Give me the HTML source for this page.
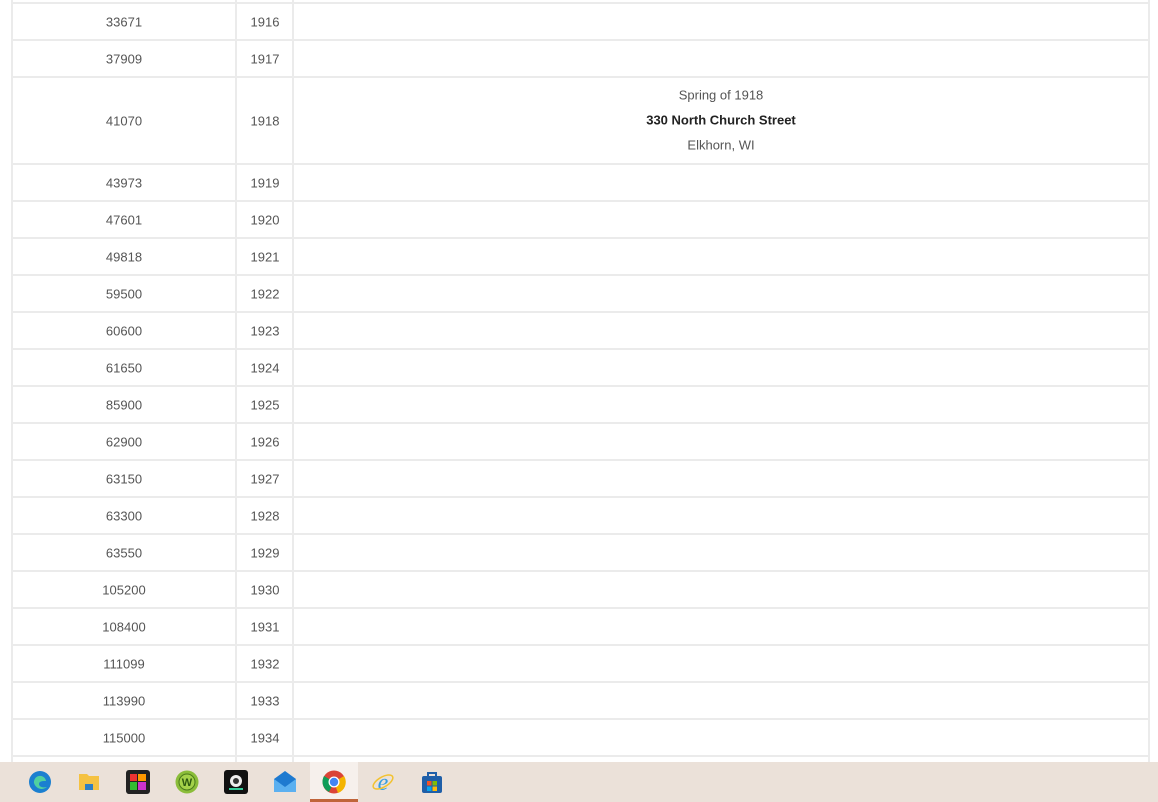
<!DOCTYPE html>
<html><head><style>
body{margin:0;width:1158px;height:802px;overflow:hidden;background:#fff;position:relative;font-family:"Liberation Sans",sans-serif;font-size:13px;color:#555}
.h{position:absolute;left:12px;width:1138px;height:2px;background:#ebebeb}
.v{position:absolute;top:0;height:762px;width:2px;background:#ebebeb}
.t{position:absolute;transform:translate(-50%,-50%);white-space:nowrap}
.tb{position:absolute;left:0;top:762px;width:1158px;height:40px;background:#ebe1d9}
.ic{position:absolute;top:770px;width:24px;height:24px}
</style></head><body>
<div class="v" style="left:11px"></div>
<div class="v" style="left:235px"></div>
<div class="v" style="left:292px"></div>
<div class="v" style="left:1148px"></div>
<div id="rows"></div>
<script>
var ys=[2,39,76,163,200,237,274,311,348,385,422,459,496,533,570,607,644,681,718,755];
var d=[["33671",1916],["37909",1917],["41070",1918],["43973",1919],["47601",1920],["49818",1921],["59500",1922],["60600",1923],["61650",1924],["85900",1925],["62900",1926],["63150",1927],["63300",1928],["63550",1929],["105200",1930],["108400",1931],["111099",1932],["113990",1933],["115000",1934]];
var h="";
ys.forEach(function(y){h+='<div class="h" style="top:'+y+'px"></div>';});
d.forEach(function(r,i){var c=(ys[i]+ys[i+1])/2+1;
h+='<div class="t" style="left:124px;top:'+c+'px">'+r[0]+'</div><div class="t" style="left:265px;top:'+c+'px">'+r[1]+'</div>';});
document.getElementById("rows").innerHTML=h;
</script>
<div class="t" style="left:721px;top:95px">Spring of 1918</div>
<div class="t" style="left:721px;top:120px;font-weight:bold;color:#222">330 North Church Street</div>
<div class="t" style="left:721px;top:145px">Elkhorn, WI</div>
<div class="tb"></div>
<div style="position:absolute;left:310px;top:762px;width:48px;height:40px;background:#f6f0ec"></div>
<div style="position:absolute;left:310px;top:799px;width:48px;height:3px;background:#c0643a"></div>
<svg class="ic" style="left:28px" viewBox="0 0 24 24"><circle cx="12" cy="12" r="11" fill="#1b7fd0"/><path d="M6 13a6 6 0 0 1 12-2c-3 0-7 0-7 3s4 4 8 3a8 8 0 0 1-13-4" fill="#4fd0a0"/></svg>
<svg class="ic" style="left:77px" viewBox="0 0 24 24"><path d="M2 4h8l2 2h10v14H2z" fill="#f5c242"/><rect x="8" y="14" width="8" height="6" fill="#2f7fc4"/></svg>
<svg class="ic" style="left:126px" viewBox="0 0 24 24"><rect width="24" height="24" rx="3" fill="#222"/><rect x="4" y="4" width="7" height="7" fill="#e33"/><rect x="12" y="4" width="8" height="7" fill="#f90"/><rect x="4" y="12" width="7" height="8" fill="#3b3"/><rect x="12" y="12" width="8" height="8" fill="#c3c"/></svg>
<svg class="ic" style="left:175px" viewBox="0 0 24 24"><circle cx="12" cy="12" r="11.5" fill="#8bbd3a"/><circle cx="12" cy="12" r="8" fill="#a4d24a" stroke="#4a7a1a"/><text x="12" y="16" text-anchor="middle" font-size="11" font-weight="bold" fill="#2d5a10" font-family="Liberation Sans">W</text></svg>
<svg class="ic" style="left:224px" viewBox="0 0 24 24"><rect width="24" height="24" rx="3" fill="#111"/><circle cx="12" cy="11" r="6" fill="#eee"/><circle cx="12" cy="11" r="3" fill="#333"/><path d="M5 19h14" stroke="#3c9" stroke-width="2"/></svg>
<svg class="ic" style="left:273px" viewBox="0 0 24 24"><path d="M1 9l11-8 11 8v13H1z" fill="#1e7ad0"/><path d="M1 9l11 8 11-8v13H1z" fill="#5bb0f0"/></svg>
<svg class="ic" style="left:322px" viewBox="0 0 24 24"><circle cx="12" cy="12" r="11.5" fill="#db4437"/><path d="M12 12L2 6a11.5 11.5 0 0 0 5 16z" fill="#0f9d58"/><path d="M12 12l10-6a11.5 11.5 0 0 1-6 17z" fill="#f4b400"/><circle cx="12" cy="12" r="5.5" fill="#fff"/><circle cx="12" cy="12" r="4.2" fill="#4285f4"/></svg>
<svg class="ic" style="left:371px" viewBox="0 0 24 24"><text x="12" y="20" text-anchor="middle" font-size="24" fill="#3a9ee0" font-family="Liberation Serif" font-style="italic">e</text><ellipse cx="12" cy="12" rx="11" ry="5" fill="none" stroke="#f2c230" stroke-width="1.5" transform="rotate(-30 12 12)"/></svg>
<svg class="ic" style="left:420px" viewBox="0 0 24 24"><rect x="2" y="6" width="20" height="17" rx="2" fill="#1f5fa8"/><path d="M8 6V3h8v3" fill="none" stroke="#1f5fa8" stroke-width="2"/><rect x="7" y="11" width="4.5" height="4.5" fill="#f35325"/><rect x="12.5" y="11" width="4.5" height="4.5" fill="#81bc06"/><rect x="7" y="16.5" width="4.5" height="4.5" fill="#05a6f0"/><rect x="12.5" y="16.5" width="4.5" height="4.5" fill="#ffba08"/></svg>
</body></html>
